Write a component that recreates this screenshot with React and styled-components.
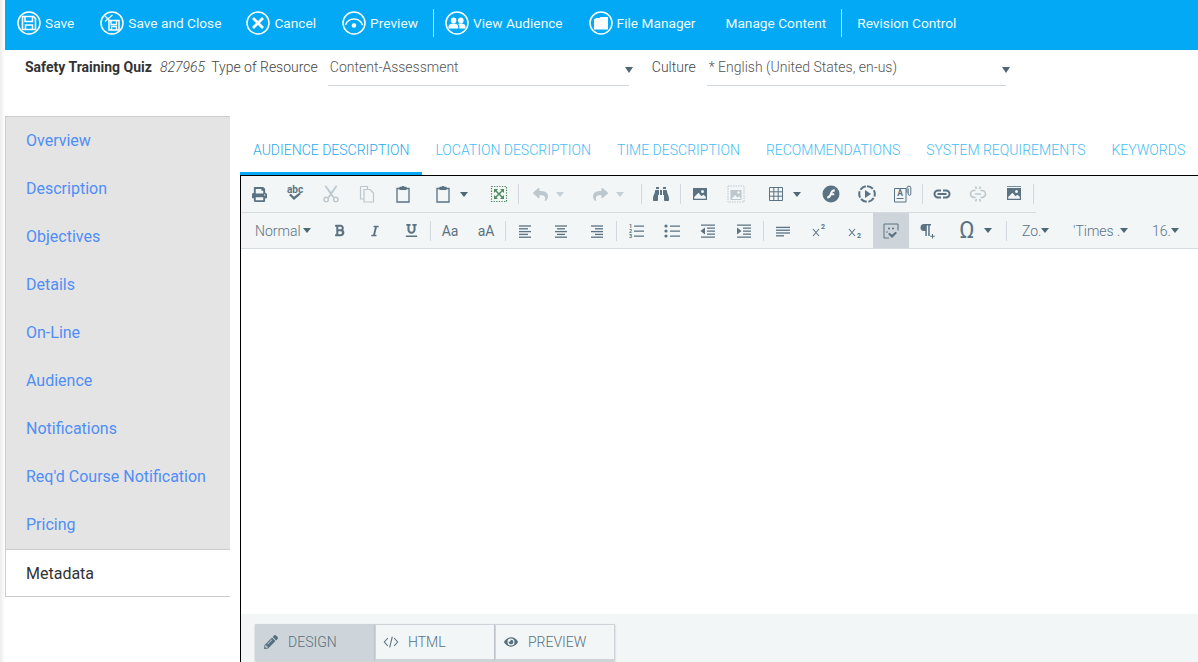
import React from "react";
import styled, { createGlobalStyle } from "styled-components";
import {
  FaPrint, FaBinoculars, FaBold, FaItalic, FaUnderline, FaPencilAlt, FaEye, FaReply, FaShare,
} from "react-icons/fa";

const GlobalStyle = createGlobalStyle`
  html, body { margin: 0; padding: 0; background: #fff; }
  body { font-family: Roboto, "Liberation Sans", sans-serif; font-size: 14px; overflow: hidden; }
`;

const Page = styled.div`
  width: 1198px;
  height: 662px;
  overflow: hidden;
  padding-left: 5px;
  box-sizing: border-box;
  display: flex;
  flex-direction: column;
  background: linear-gradient(to right, #ececec, #fff 5px);
`;

/* top action bar */
const ActionBar = styled.div`
  height: 50px;
  flex: none;
  box-sizing: border-box;
  background: #03a9f4;
  display: flex;
  align-items: center;
  padding: 0 0 4px 12px;
  color: #fff;
  font-size: 13.7px;
`;

const Action = styled.div`
  display: flex;
  align-items: center;
  gap: 4px;
  margin-right: ${({ $mr }) => $mr || 26}px;
  white-space: nowrap;
  color: #eefaff;
`;

const BarDivider = styled.div`
  width: 1px;
  height: 28px;
  background: #b5e5fb;
  margin-right: ${({ $mr }) => $mr || 11}px;
`;

const CircleIcon = styled.svg`
  width: 24px;
  height: 24px;
  flex: none;
  fill: none;
  stroke: #fff;
`;

/* title + selects row */
const InfoRow = styled.div`
  height: 66px;
  flex: none;
  display: flex;
  align-items: flex-start;
  padding-left: 20px;
  color: #444;
`;

const InfoText = styled.span`
  line-height: 35px;
  white-space: nowrap;
  font-weight: ${({ $bold }) => ($bold ? 700 : 300)};
  font-style: ${({ $italic }) => ($italic ? "italic" : "normal")};
  margin-right: ${({ $mr }) => $mr || 0}px;
  color: ${({ $bold }) => ($bold ? "#333" : "#444")};
`;

const Select = styled.div`
  width: ${({ $w }) => $w}px;
  height: 33px;
  padding: 0 0 2px 2px;
  margin-right: ${({ $mr }) => $mr || 0}px;
  border-bottom: 1px solid #cfd6dc;
  display: flex;
  align-items: center;
  justify-content: space-between;
  font-weight: 300;
  color: #555;
`;

const SelectCaret = styled.i`
  width: 0;
  height: 0;
  margin: 6px -4px 0 0;
  border-left: 4px solid transparent;
  border-right: 4px solid transparent;
  border-top: 6px solid #4f6675;
`;

const Caret = styled.i`
  display: inline-block;
  width: 0;
  height: 0;
  flex: none;
  border-left: 4px solid transparent;
  border-right: 4px solid transparent;
  border-top: 5px solid ${({ $light }) => ($light ? "#c5d0d6" : "#4f6675")};
`;

/* main split */
const Main = styled.div`
  flex: 1;
  display: flex;
  min-height: 0;
`;

const SideNav = styled.nav`
  width: 225px;
  flex: none;
  margin-right: 10px;
  align-self: flex-start;
  border-left: 1px solid #ccc;
  border-top: 1px solid #ccc;
  box-sizing: border-box;
`;

const NavItem = styled.div`
  height: 48px;
  line-height: 48px;
  box-sizing: border-box;
  padding-left: 20px;
  font-size: 16px;
  background: ${({ $active }) => ($active ? "#fff" : "#e4e4e4")};
  color: ${({ $active }) => ($active ? "#333" : "#4f8ef7")};
  border-top: ${({ $active }) => ($active ? "1px solid #ccc" : "none")};
  border-bottom: ${({ $active }) => ($active ? "1px solid #ccc" : "none")};
`;

const Content = styled.div`
  flex: 1;
  min-width: 0;
  display: flex;
  flex-direction: column;
`;

const Tabs = styled.div`
  display: flex;
  padding-top: 11px;
  flex: none;
`;

const Tab = styled.div`
  height: 48px;
  box-sizing: border-box;
  line-height: 47px;
  padding: 0 13px;
  white-space: nowrap;
  text-transform: uppercase;
  font-size: 14px;
  color: ${({ $active }) => ($active ? "#29a9ee" : "#45bdf5")};
  border-bottom: 3px solid ${({ $active }) => ($active ? "#03a9f4" : "transparent")};
  font-weight: 300;
`;

const Editor = styled.div`
  flex: 1;
  min-height: 0;
  display: flex;
  flex-direction: column;
  border-top: 1px solid #000;
  border-left: 1px solid #000;
`;

const ToolRow = styled.div`
  height: ${({ $h }) => $h}px;
  flex: none;
  box-sizing: border-box;
  background: #f2f6f7;
  display: flex;
  align-items: center;
  border-bottom: ${({ $last }) => ($last ? "1px solid #d5dbdf" : "none")};
`;

const ToolsInner = styled.div`
  display: flex;
  align-items: center;
  height: 100%;
  box-sizing: border-box;
  width: ${({ $w }) => ($w ? `${$w}px` : "100%")};
  border-bottom: ${({ $w }) => ($w ? "1px solid #d5dbdf" : "none")};
`;

const Tool = styled.div`
  width: ${({ $w }) => $w || 36}px;
  height: 100%;
  flex: none;
  box-sizing: border-box;
  display: flex;
  align-items: center;
  justify-content: ${({ $drop }) => ($drop ? "flex-start" : "center")};
  padding-left: ${({ $drop }) => ($drop ? 13 : 0)}px;
  gap: ${({ $drop }) => ($drop ? 8 : 0)}px;
  background: ${({ $on }) => ($on ? "#cdd5da" : "transparent")};
  color: ${({ $off }) => ($off ? "#bcc8ce" : "#5b7282")};
`;

const ToolSep = styled.div`
  width: 1px;
  height: 20px;
  flex: none;
  margin: 0 1px;
  background: #d3dadf;
`;

const ToolSvg = styled.svg`
  width: 18px;
  height: 18px;
  flex: none;
  fill: currentColor;
  stroke: none;
`;

const CodeSvg = styled(ToolSvg)`
  width: 16px;
  height: 16px;
  margin: 0 -1px;
`;

const CaseLabel = styled.span`
  font-size: 14px;
  color: #5b7282;
`;

const OmegaLabel = styled.span`
  width: 18px;
  text-align: center;
  font-size: 23px;
  line-height: 1;
  color: #5b7282;
`;

const DropLabel = styled.div`
  display: flex;
  align-items: center;
  gap: ${({ $gap }) => $gap || 0}px;
  flex: none;
  width: ${({ $w }) => $w}px;
  padding-left: ${({ $pl }) => $pl}px;
  box-sizing: border-box;
  white-space: nowrap;
  font-size: 14px;
  font-weight: 300;
  color: #5b7282;
`;

const EditArea = styled.div`
  flex: 1;
  background: #fff;
`;

const ModeBar = styled.div`
  height: 48px;
  flex: none;
  background: #f2f6f7;
  display: flex;
  padding: 10px 0 0 14px;
  box-sizing: border-box;
`;

const ModeButton = styled.div`
  width: 120px;
  height: 37px;
  box-sizing: border-box;
  display: flex;
  align-items: center;
  gap: 10px;
  padding-left: 8px;
  font-size: 14px;
  font-weight: 300;
  color: #56707f;
  border: 1px solid #ccd4d9;
  border-bottom-width: 2px;
  box-shadow: 0 1px 2px rgba(0, 0, 0, 0.2);
  background: ${({ $on }) => ($on ? "#cdd5da" : "#f2f6f7")};
`;

/* header icons, white on the blue bar */
const Circle = () => <circle cx="12" cy="12" r="11" strokeWidth="1.5" />;

const SaveIcon = () => (
  <CircleIcon viewBox="0 0 24 24">
    <Circle />
    <path d="M5.500 5.500h11l2 2v11h-13z" strokeWidth="1.600" />
    <path d="M8 6v4.500h7.500V6M8.500 18.500v-4.500h7v4.500" strokeWidth="1.500" />
  </CircleIcon>
);

const SaveCloseIcon = () => (
  <CircleIcon viewBox="0 0 24 24">
    <Circle />
    <path d="M9 9.500h10v9.500H9z" strokeWidth="1.500" />
    <path d="M11 10v3.500h5.500V10M11.500 19v-3.500h5V19" strokeWidth="1.300" />
    <path d="M4.500 4.500l6.500 6.500M5 10.500l7.500-6.500" strokeWidth="1.100" />
  </CircleIcon>
);

const CancelIcon = () => (
  <CircleIcon viewBox="0 0 24 24">
    <Circle />
    <path d="M7 7l10 10M17 7L7 17" strokeWidth="2.800" />
  </CircleIcon>
);

const PreviewIcon = () => (
  <CircleIcon viewBox="0 0 24 24">
    <Circle />
    <path d="M3.500 14a9 9 0 0 1 17 0" strokeWidth="1.500" />
    <circle cx="12" cy="14.500" r="2.300" fill="#fff" stroke="none" />
  </CircleIcon>
);

const AudienceIcon = () => (
  <CircleIcon viewBox="0 0 24 24">
    <Circle />
    <g fill="#fff" stroke="none">
      <circle cx="8.600" cy="9.400" r="2.800" />
      <circle cx="15.800" cy="9.400" r="2.800" />
      <path d="M3.500 17.500v-2c0-1.800 2.200-3 5-3s4.700 1.200 4.700 3v2zM14.300 17.500v-2c0-1.100-.4-2-1.100-2.600 1-.3 1.800-.4 2.800-.4 2.600 0 4.500 1.200 4.500 3v2z" />
    </g>
  </CircleIcon>
);

const FolderIcon = () => (
  <CircleIcon viewBox="0 0 24 24">
    <Circle />
    <path d="M5 8.500l2-1.500h3.500L11.500 6h7.500v12.500H5z" fill="#fff" stroke="none" />
  </CircleIcon>
);

/* editor toolbar drawings */
const Spell = () => (
  <ToolSvg viewBox="0 0 18 18">
    <text x="9" y="7.500" textAnchor="middle" fontSize="10" fontWeight="700" fontFamily="Roboto, sans-serif">abc</text>
    <path d="M3 10l1.800-1.300 3.200 3 5.200-3.900 1.800 1.300-7 6z" />
  </ToolSvg>
);

const Cut = () => (
  <ToolSvg viewBox="0 0 18 18">
    <path d="M2.500 1l1.600-.4L9 7l4.900-6.400 1.600.4L10 9l2.200 3-1 1.300L9 10.500l-2.200 2.800-1-1.300L8 9z" />
    <path fillRule="evenodd" d="M4.200 11.500a2.900 2.900 0 1 0 0 5.800a2.900 2.900 0 0 0 0-5.800zm0 1.400a1.500 1.500 0 1 1 0 3a1.500 1.500 0 0 1 0-3zM13.800 11.500a2.900 2.900 0 1 0 0 5.800a2.900 2.900 0 0 0 0-5.800zm0 1.400a1.500 1.500 0 1 1 0 3a1.500 1.500 0 0 1 0-3z" />
  </ToolSvg>
);

const Copy = () => (
  <ToolSvg viewBox="0 0 18 18">
    <path d="M2.500 1.500h7v3M2.500 1.500v12.500h3.500" fill="none" stroke="currentColor" strokeWidth="1.200" />
    <path d="M6 4.500h6l3.500 3.500v9H6z" fill="none" stroke="currentColor" strokeWidth="1.200" />
  </ToolSvg>
);

const Paste = () => (
  <ToolSvg viewBox="0 0 18 18">
    <path d="M3 3.500h12v13.500H3z" fill="none" stroke="currentColor" strokeWidth="1.300" />
    <path d="M5.500 1.800h2.200l.5-.8h1.600l.5.800h2.200v3.200h-7z" />
  </ToolSvg>
);

const SelectAll = () => (
  <ToolSvg viewBox="0 0 18 18">
    <path d="M1.500 1.500h15v15h-15z" fill="none" stroke="#4f8a5e" strokeWidth="1.200" strokeDasharray="1.300 1.300" />
    <path d="M4 4h4L6.500 5.500 9 8 11.500 5.500 10 4h4v4l-1.500-1.500L10 9l2.500 2.500L14 10v4h-4l1.500-1.500L9 10l-2.500 2.500L8 14H4v-4l1.500 1.500L8 9 5.500 6.500 4 8z" fill="#4f8a5e" />
  </ToolSvg>
);

const Picture = ({ dots }) => (
  <ToolSvg viewBox="0 0 18 18">
    <path fillRule="evenodd" d="M2 3h14v12H2zM11.500 5a1.500 1.500 0 1 0 0 3a1.500 1.500 0 0 0 0-3zM3.200 13.800h11.600v-2l-2.300-2-2 1.400-3-3.500-4.300 4.200z" />
    {dots && <path d="M2 1.200h14v.8H2z" />}
  </ToolSvg>
);

const PictureFrame = () => (
  <ToolSvg viewBox="0 0 18 18">
    <path d="M1 1h16v16H1z" fill="none" stroke="currentColor" strokeDasharray="1.500 1" />
    <path d="M3.500 5h11v10h-11z" />
    <path d="M4.500 14l3.500-4 2.500 2.500 1.500-1.500 2 3z" fill="#f2f6f7" />
    <circle cx="11.500" cy="7.500" r="1.300" fill="#f2f6f7" />
  </ToolSvg>
);

const Table = () => (
  <ToolSvg viewBox="0 0 18 18">
    <path d="M2.500 2.500h13v13h-13zM6.800 2.500v13M11.200 2.500v13M2.500 6.800h13M2.500 11.200h13" fill="none" stroke="currentColor" />
  </ToolSvg>
);

const Flash = () => (
  <ToolSvg viewBox="0 0 18 18">
    <path fillRule="evenodd" d="M9 .5a8.500 8.500 0 1 0 0 17A8.500 8.500 0 0 0 9 .5zm3.800 3.700v2.200c-1.500 0-2 .7-2.500 1.800h2v2h-2.800c-.8 2-2 3.300-4.300 3.300v-2.200c1.500 0 2-.9 2.600-2.500.9-2.900 2-4.600 5-4.600z" />
  </ToolSvg>
);

const Play = () => (
  <ToolSvg viewBox="0 0 18 18">
    <path d="M7 5l6 4-6 4z" />
    <path d="M9 1.200a7.800 7.800 0 1 1 0 15.600A7.800 7.800 0 0 1 9 1.200z" fill="none" stroke="currentColor" strokeWidth="2" strokeDasharray="6.500 1.700" />
  </ToolSvg>
);

const DocAttach = () => (
  <ToolSvg viewBox="0 0 18 18">
    <path d="M.5 3.500h11.500v13.500H.5z" fill="none" stroke="currentColor" />
    <text x="6" y="11" textAnchor="middle" fontSize="8.500" fontWeight="700" fontFamily="Roboto, sans-serif">A</text>
    <path d="M2.500 13h7v1h-7z" />
    <path d="M13 8V3a1.900 1.900 0 0 1 3.800 0v6a1.300 1.300 0 0 1-2.600 0V3.500" fill="none" stroke="currentColor" strokeWidth="1" />
  </ToolSvg>
);

const LinkIcon = () => (
  <ToolSvg viewBox="0 0 18 18">
    <path d="M8 5.500H5a3.500 3.500 0 0 0 0 7h3M10 5.500h3a3.500 3.500 0 0 1 0 7h-3M4.500 9h9" fill="none" stroke="currentColor" strokeWidth="2" />
  </ToolSvg>
);

const UnlinkIcon = () => (
  <ToolSvg viewBox="0 0 18 18">
    <path d="M6.500 5.500H5a3.500 3.500 0 0 0 0 7h1.500M11.500 5.500H13a3.500 3.500 0 0 1 0 7h-1.500M6 9h6M6.500 1.500l1 2.500M11.500 1.500l-1 2.500M6.500 16.500l1-2.500M11.500 16.500l-1-2.500" fill="none" stroke="currentColor" strokeWidth="1.700" />
  </ToolSvg>
);

const Lines = ({ rows, gap = 2.800 }) => {
  const top = 9.600 - ((rows.length - 1) * gap + 1.300) / 2;
  return (
    <ToolSvg viewBox="0 0 18 18">
      {rows.map(([x, w], i) => (
        <rect key={i} x={x} y={top + i * gap} width={w} height="1.300" />
      ))}
    </ToolSvg>
  );
};

const OrderedList = () => (
  <ToolSvg viewBox="0 0 18 18">
    <text x="3.500" y="6" textAnchor="middle" fontSize="5.500" fontWeight="700" fontFamily="Roboto, sans-serif">1</text>
    <text x="3.500" y="11" textAnchor="middle" fontSize="5.500" fontWeight="700" fontFamily="Roboto, sans-serif">2</text>
    <text x="3.500" y="16" textAnchor="middle" fontSize="5.500" fontWeight="700" fontFamily="Roboto, sans-serif">3</text>
    <path d="M7 3.500h10v1.200H7zM7 8.500h10v1.200H7zM7 13.500h10v1.200H7z" />
  </ToolSvg>
);

const BulletList = () => (
  <ToolSvg viewBox="0 0 18 18">
    <circle cx="3" cy="4" r="1.600" />
    <circle cx="3" cy="9" r="1.600" />
    <circle cx="3" cy="14" r="1.600" />
    <path d="M7 3.500h10v1.200H7zM7 8.500h10v1.200H7zM7 13.500h10v1.200H7z" />
  </ToolSvg>
);

const Indent = ({ out }) => (
  <ToolSvg viewBox="0 0 18 18">
    <path d="M2 2.500h14v1.200H2zM8 5.500h8v1.200H8zM8 8.500h8v1.200H8zM8 11.500h8v1.200H8zM2 14.500h14v1.200H2z" />
    <path d={out ? "M6 5.500v7L1.500 9z" : "M2 5.500v7L6.500 9z"} />
  </ToolSvg>
);

const Script = ({ sup }) => (
  <ToolSvg viewBox="0 0 18 18">
    <path d="M3 7l6 7M9 7l-6 7" fill="none" stroke="currentColor" strokeWidth="1.100" />
    <text x="13" y={sup ? 7 : 16} textAnchor="middle" fontSize="7" fontWeight="700" fontFamily="Roboto, sans-serif">2</text>
  </ToolSvg>
);

const ActiveBlocks = () => (
  <ToolSvg viewBox="0 0 18 18">
    <path d="M2 2h14v6.500M2 2v14h5" fill="none" stroke="currentColor" />
    <path d="M6 12l1.500-1.200 2.500 2 3.500-3 1.500 1.200-5 5z" />
    <circle cx="7" cy="6.500" r="1" />
    <circle cx="11" cy="6.500" r="1" />
    <circle cx="5" cy="10" r=".8" />
  </ToolSvg>
);

const Pilcrow = () => (
  <ToolSvg viewBox="0 0 18 18">
    <path fillRule="evenodd" d="M6 2h7v1.500h-1.300V14h-1.500V3.500H8.800V14H7.300V9H6a3.500 3.500 0 0 1 0-7z" />
    <path d="M14 12h1v1.800h1.800v1H15v1.800h-1v-1.800h-1.800v-1H14z" />
  </ToolSvg>
);

const Code = () => (
  <CodeSvg viewBox="0 0 18 18">
    <path d="M5.500 4.500L1.500 9l4 4.500M12.500 4.500l4 4.500-4 4.500M10.500 3l-3 12" fill="none" stroke="currentColor" strokeWidth="1.200" />
  </CodeSvg>
);

const navItems = [
  "Overview", "Description", "Objectives", "Details", "On-Line", "Audience",
  "Notifications", "Req'd Course Notification", "Pricing",
];

const tabs = [
  "Audience Description", "Location Description", "Time Description",
  "Recommendations", "System Requirements", "Keywords",
];

const alignLeft = [[3, 12], [3, 9], [3, 12], [3, 9], [3, 12]];
const alignCenter = [[3, 12], [5, 8], [3, 12], [5, 8], [3, 12]];
const alignRight = [[3, 12], [7, 8], [3, 12], [7, 8], [3, 12]];
const alignFull = [[2, 14], [2, 14], [2, 14], [2, 8]];

export default function App() {
  return (
    <Page>
      <GlobalStyle />
      <ActionBar>
        <Action><SaveIcon />Save</Action>
        <Action $mr={25}><SaveCloseIcon />Save and Close</Action>
        <Action><CancelIcon />Cancel</Action>
        <Action $mr={15}><PreviewIcon />Preview</Action>
        <BarDivider />
        <Action><AudienceIcon />View Audience</Action>
        <Action $mr={30}><FolderIcon />File Manager</Action>
        <Action $mr={15}>Manage Content</Action>
        <BarDivider $mr={15} />
        <Action>Revision Control</Action>
      </ActionBar>

      <InfoRow>
        <InfoText $bold $mr={8}>Safety Training Quiz</InfoText>
        <InfoText $italic $mr={6}>827965</InfoText>
        <InfoText $mr={10}>Type of Resource</InfoText>
        <Select $w={299} $mr={23}>
          Content-Assessment
          <SelectCaret />
        </Select>
        <InfoText $mr={11}>Culture</InfoText>
        <Select $w={297}>
          * English (United States, en-us)
          <SelectCaret />
        </Select>
      </InfoRow>

      <Main>
        <SideNav>
          {navItems.map((item) => (
            <NavItem key={item}>{item}</NavItem>
          ))}
          <NavItem $active>Metadata</NavItem>
        </SideNav>

        <Content>
          <Tabs>
            {tabs.map((tab, i) => (
              <Tab key={tab} $active={i === 0}>{tab}</Tab>
            ))}
          </Tabs>

          <Editor>
            <ToolRow $h={37}>
              <ToolsInner $w={795}>
                <Tool><FaPrint size={15} /></Tool>
                <Tool><Spell /></Tool>
                <Tool $off><Cut /></Tool>
                <Tool $off><Copy /></Tool>
                <Tool><Paste /></Tool>
                <Tool $drop $w={60}><Paste /><Caret /></Tool>
                <Tool><SelectAll /></Tool>
                <ToolSep />
                <Tool $drop $w={60} $off><FaReply size={15} /><Caret $light /></Tool>
                <Tool $drop $w={60} $off><FaShare size={15} /><Caret $light /></Tool>
                <ToolSep />
                <Tool><FaBinoculars size={16} /></Tool>
                <ToolSep />
                <Tool><Picture /></Tool>
                <Tool $off><PictureFrame /></Tool>
                <Tool $drop $w={59}><Table /><Caret /></Tool>
                <Tool><Flash /></Tool>
                <Tool><Play /></Tool>
                <Tool><DocAttach /></Tool>
                <ToolSep />
                <Tool><LinkIcon /></Tool>
                <Tool $off><UnlinkIcon /></Tool>
                <Tool><Picture dots /></Tool>
                <ToolSep />
              </ToolsInner>
            </ToolRow>
            <ToolRow $h={36} $last>
              <ToolsInner>
                <DropLabel $w={80} $pl={14} $gap={2}>Normal<Caret /></DropLabel>
                <Tool><FaBold size={13} /></Tool>
                <Tool><FaItalic size={12} /></Tool>
                <Tool><FaUnderline size={13} /></Tool>
                <ToolSep />
                <Tool><CaseLabel>Aa</CaseLabel></Tool>
                <Tool><CaseLabel>aA</CaseLabel></Tool>
                <ToolSep />
                <Tool><Lines rows={alignLeft} /></Tool>
                <Tool><Lines rows={alignCenter} /></Tool>
                <Tool><Lines rows={alignRight} /></Tool>
                <ToolSep />
                <Tool><OrderedList /></Tool>
                <Tool><BulletList /></Tool>
                <Tool><Indent out /></Tool>
                <Tool><Indent /></Tool>
                <ToolSep />
                <Tool><Lines rows={alignFull} /></Tool>
                <Tool><Script sup /></Tool>
                <Tool><Script /></Tool>
                <Tool $on><ActiveBlocks /></Tool>
                <Tool><Pilcrow /></Tool>
                <Tool $drop $w={60}><OmegaLabel>Ω</OmegaLabel><Caret /></Tool>
                <ToolSep />
                <DropLabel $w={52} $pl={14}>Zo.<Caret /></DropLabel>
                <DropLabel $w={92} $pl={13}>'Times .<Caret /></DropLabel>
                <DropLabel $w={40} $pl={0}>16.<Caret /></DropLabel>
              </ToolsInner>
            </ToolRow>
            <EditArea />
            <ModeBar>
              <ModeButton $on><FaPencilAlt size={14} />DESIGN</ModeButton>
              <ModeButton><Code />HTML</ModeButton>
              <ModeButton><FaEye size={14} />PREVIEW</ModeButton>
            </ModeBar>
          </Editor>
        </Content>
      </Main>
    </Page>
  );
}
